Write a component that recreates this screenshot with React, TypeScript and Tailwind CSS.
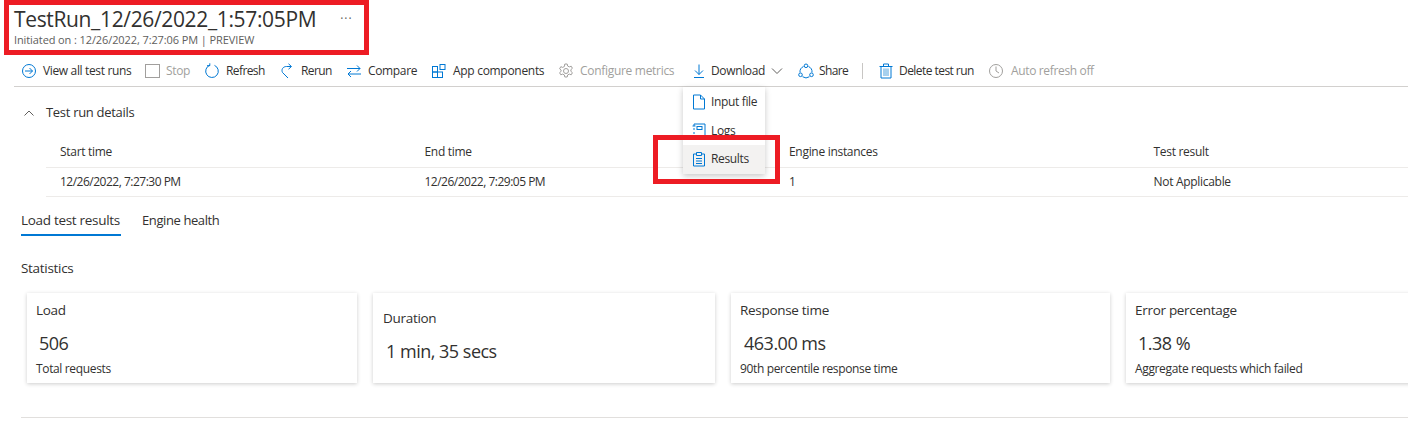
import type { ReactNode } from "react";

const blue = "#0078d4";

const Icon = ({ children, color = blue }: { children: ReactNode; color?: string }) => (
  <svg width="16" height="16" viewBox="0 0 16 16" fill="none" stroke={color} strokeWidth="1" className="shrink-0">
    {children}
  </svg>
);

const tools = [
  {
    label: "View all test runs",
    w: "w-[124px]",
    gap: "gap-[6px]",
    icon: (
      <Icon>
        <circle cx="8" cy="8" r="6.5" />
        <path d="M4 8h7.5M8.5 5l3 3-3 3" />
      </Icon>
    ),
  },
  {
    label: "Stop",
    w: "w-[59px]",
    gap: "gap-[5px]",
    off: true,
    icon: (
      <Icon color="#a19f9d">
        <rect x="0.5" y="1.5" width="14" height="13" />
      </Icon>
    ),
  },
  {
    label: "Refresh",
    w: "w-[76px]",
    gap: "gap-[6px]",
    t: "tracking-[-0.6px]",
    icon: (
      <Icon>
        <path d="M6 2.2A6.3 6.3 0 1 0 10.5 2.4M5.8 0.3v2.4H3" />
      </Icon>
    ),
  },
  {
    label: "Rerun",
    w: "w-[66px]",
    gap: "gap-[5px]",
    t: "tracking-[-0.6px]",
    icon: (
      <Icon>
        <path d="M11 3.5H6.5C3 3.5 1 6.5 2.5 9.5L8 15M8.5 0.8l3 2.7-3 2.7" />
      </Icon>
    ),
  },
  {
    label: "Compare",
    w: "w-[85px]",
    gap: "gap-[6px]",
    icon: (
      <Icon>
        <path d="M1 5.5h13M11 2.5l3 3-3 3M15 11H2M5 8l-3 3 3 3" />
      </Icon>
    ),
  },
  {
    label: "App components",
    w: "w-[127px]",
    gap: "gap-[6px]",
    t: "tracking-[-0.3px]",
    icon: (
      <Icon>
        <rect x="1.5" y="3.5" width="5" height="5.5" />
        <rect x="1.5" y="9" width="5" height="5.5" />
        <rect x="6.5" y="9" width="5" height="5.5" />
        <rect x="9" y="1.5" width="5" height="5" />
      </Icon>
    ),
  },
  {
    label: "Configure metrics",
    w: "w-[133px]",
    gap: "gap-[6px]",
    off: true,
    t: "tracking-[-0.3px]",
    icon: (
      <Icon color="#a19f9d">
        <circle cx="8" cy="8" r="2.5" />
        <path d="M6.8 1h2.4l.4 2 1.7.9 1.9-.7 1.2 2.1-1.5 1.3v1.8l1.5 1.3-1.2 2.1-1.9-.7-1.7.9-.4 2H6.8l-.4-2-1.7-.9-1.9.7-1.2-2.1 1.5-1.3V7.1L1.6 5.8l1.2-2.1 1.9.7 1.7-.9z" />
      </Icon>
    ),
  },
  {
    label: "Download",
    w: "w-[80px]",
    gap: "gap-[4px]",
    icon: (
      <Icon>
        <path d="M8 1.5v10M4 7.5l4 4 4-4M3 14.5h10" />
      </Icon>
    ),
  },
];

const menu = [
  {
    label: "Input file",
    icon: (
      <Icon>
        <path d="M2.5 1h7l4 4v10h-11zM9.5 1v4h4" />
      </Icon>
    ),
  },
  {
    label: "Logs",
    icon: (
      <Icon>
        <path d="M3 1h11v14H3M3 1v2M3 5v2M3 9v2M3 13v2M1.5 3h3M1.5 13h3" />
        <rect x="6" y="3.5" width="5" height="3" />
      </Icon>
    ),
  },
  {
    label: "Results",
    icon: (
      <Icon>
        <path d="M5 3H2.5v12h11V3H11M5.5 1.5h5v3h-5zM5 7.5h6M5 10h6M5 12.5h6" />
      </Icon>
    ),
  },
];

const cols = [
  { head: "Start time", value: "12/26/2022, 7:27:30 PM", t: "tracking-[-0.5px]" },
  { head: "End time", value: "12/26/2022, 7:29:05 PM", t: "tracking-[-0.5px]" },
  { head: "Engine instances", value: "1", t: "" },
  { head: "Test result", value: "Not Applicable", t: "" },
];

const stats = [
  { title: "Load", value: "506", note: "Total requests", w: "w-[330px]", ml: "ml-[3px]", pl: "pl-[9px]" },
  { title: "Duration", value: "1 min, 35 secs", note: "", w: "w-[342px]", ml: "ml-[3px]", pl: "pl-[10px]" },
  { title: "Response time", value: "463.00 ms", note: "90th percentile response time", w: "w-[379px]", ml: "ml-1", pl: "pl-[9px]" },
  { title: "Error percentage", value: "1.38 %", note: "Aggregate requests which failed", w: "w-[300px]", ml: "ml-[3px]", pl: "pl-[9px]" },
];

export default function App() {
  return (
    <div className="relative h-[442px] w-[1408px] overflow-hidden bg-white font-['Open_Sans',sans-serif] text-xs text-[#323130]">
      <div className="ml-[4px] h-[55px] w-[365px] border-[5px] border-[#ed1c24] pl-[5px]">
        <div className="flex items-center">
          <span className="text-[21px] font-medium leading-[28px] tracking-[-0.35px]">TestRun_12/26/2022_1:57:05PM</span>
          <span className="ml-[24px] text-[12px] leading-none tracking-[1px] text-[#605e5c]">···</span>
        </div>
        <div className="text-[11px] leading-[14px] tracking-[-0.1px] text-[#605e5c]">Initiated on : 12/26/2022, 7:27:06 PM | PREVIEW</div>
      </div>

      <div className="ml-[14px] mt-[1px] flex h-[31px] items-center border-b border-[#d2d0ce] pl-[7px] tracking-[-0.35px]">
        {tools.map((t) => (
          <div key={t.label} className={`flex items-center ${t.gap} ${t.w} ${t.off ? "text-[#a19f9d]" : ""} ${t.t ?? ""}`}>
            {t.icon}
            <span className="whitespace-nowrap">{t.label}</span>
          </div>
        ))}
        <svg width="12" height="8" viewBox="0 0 12 8" fill="none" stroke="#605e5c" className="shrink-0">
          <path d="M1 1.5l5 5 5-5" />
        </svg>
        <div className="ml-[15px] flex w-[50px] items-center gap-[5px] tracking-[-0.6px]">
          <Icon>
            <path d="M5.5 3.5A6 6 0 0 0 2 9.5M10.5 3.5A6 6 0 0 1 14 9.5M4.5 13.7a6 6 0 0 0 7 0" />
            <circle cx="8" cy="2.8" r="1.8" />
            <circle cx="2.5" cy="11.8" r="1.8" />
            <circle cx="13.5" cy="11.8" r="1.8" />
          </Icon>
          <span>Share</span>
        </div>
        <div className="ml-[14px] h-[16px] w-px bg-[#c8c6c4]" />
        <div className="ml-[15px] flex w-[110px] items-center gap-[5px] tracking-[-0.55px]">
          <Icon>
            <path d="M3 3.5v11.5h10V3.5M1.5 3.5h13M5.5 3.5V1h5v2.5" />
            <rect x="5" y="5.5" width="6" height="7.5" fill="#a6d0ee" stroke="none" />
          </Icon>
          <span className="whitespace-nowrap">Delete test run</span>
        </div>
        <div className="flex items-center gap-[7px] text-[#a19f9d]">
          <Icon color="#a19f9d">
            <circle cx="8" cy="8" r="6.5" />
            <path d="M8 3.5V8l3 2" />
          </Icon>
          <span className="whitespace-nowrap">Auto refresh off</span>
        </div>
      </div>

      <div className="ml-[24px] mt-[17px] flex h-[18px] items-center gap-[12px] tracking-[-0.3px]">
        <svg width="10" height="6" viewBox="0 0 10 6" fill="none" stroke="#605e5c">
          <path d="M0.5 5.5 5 1l4.5 4.5" />
        </svg>
        <span className="text-[13px]">Test run details</span>
      </div>

      <div className="ml-[46px] mt-[15px] tracking-[-0.3px]">
        <div className="flex h-[31px] items-center border-b border-[#edebe9] pl-[14px]">
          {cols.map((c) => (
            <div key={c.head} className="w-[364.5px] shrink-0">{c.head}</div>
          ))}
        </div>
        <div className="flex h-[29px] items-center border-b border-[#edebe9] pl-[14px]">
          {cols.map((c) => (
            <div key={c.head} className={`w-[364.5px] shrink-0 ${c.t}`}>{c.value}</div>
          ))}
        </div>
      </div>

      <div className="ml-[21px] mt-[13px] flex gap-[21px] tracking-[-0.3px]">
        <div className="h-[26px] w-[100px] whitespace-nowrap border-b-2 border-[#0078d4] text-[13.5px] leading-[21px]">Load test results</div>
        <div className="text-[13px] leading-[21px] tracking-[-0.4px]">Engine health</div>
      </div>

      <div className="ml-[21px] mt-[20px] text-[13.5px] font-medium leading-[24px] tracking-[-0.3px]">Statistics</div>

      <div className="ml-[27px] mt-[13px] flex tracking-[-0.35px]">
        {stats.map((s) => (
          <div
            key={s.title}
            className={`mr-[16px] flex h-[90px] shrink-0 flex-col justify-center bg-white pt-[2px] shadow-[0_1px_4px_rgba(0,0,0,0.2)] ${s.note ? "" : "pb-[5px]"} ${s.w} ${s.pl}`}
          >
            <div className="text-[13.5px] leading-[18px] tracking-[-0.3px]">{s.title}</div>
            <div className={`mt-[11px] text-[18px] font-medium leading-[26px] tracking-[-0.5px] ${s.ml}`}>{s.value}</div>
            {s.note && <div className="mt-[5px] leading-[16px]">{s.note}</div>}
          </div>
        ))}
      </div>

      <div className="ml-[21px] mt-[34px] h-px bg-[#e1dfdd]" />

      <div className="absolute left-[683px] top-[87px] w-[82px] bg-white pt-[1px] tracking-[-0.35px] shadow-[0_2px_6px_rgba(0,0,0,0.22)]">
        {menu.map((m) => (
          <div key={m.label} className={`flex h-[28.5px] items-center gap-[4px] pl-[8px] ${m.label === "Results" ? "bg-[#f3f2f1]" : ""}`}>
            {m.icon}
            <span className="whitespace-nowrap">{m.label}</span>
          </div>
        ))}
      </div>

      <div className="absolute left-[653px] top-[135px] h-[49px] w-[127px] border-[5px] border-[#ed1c24]" />
    </div>
  );
}
